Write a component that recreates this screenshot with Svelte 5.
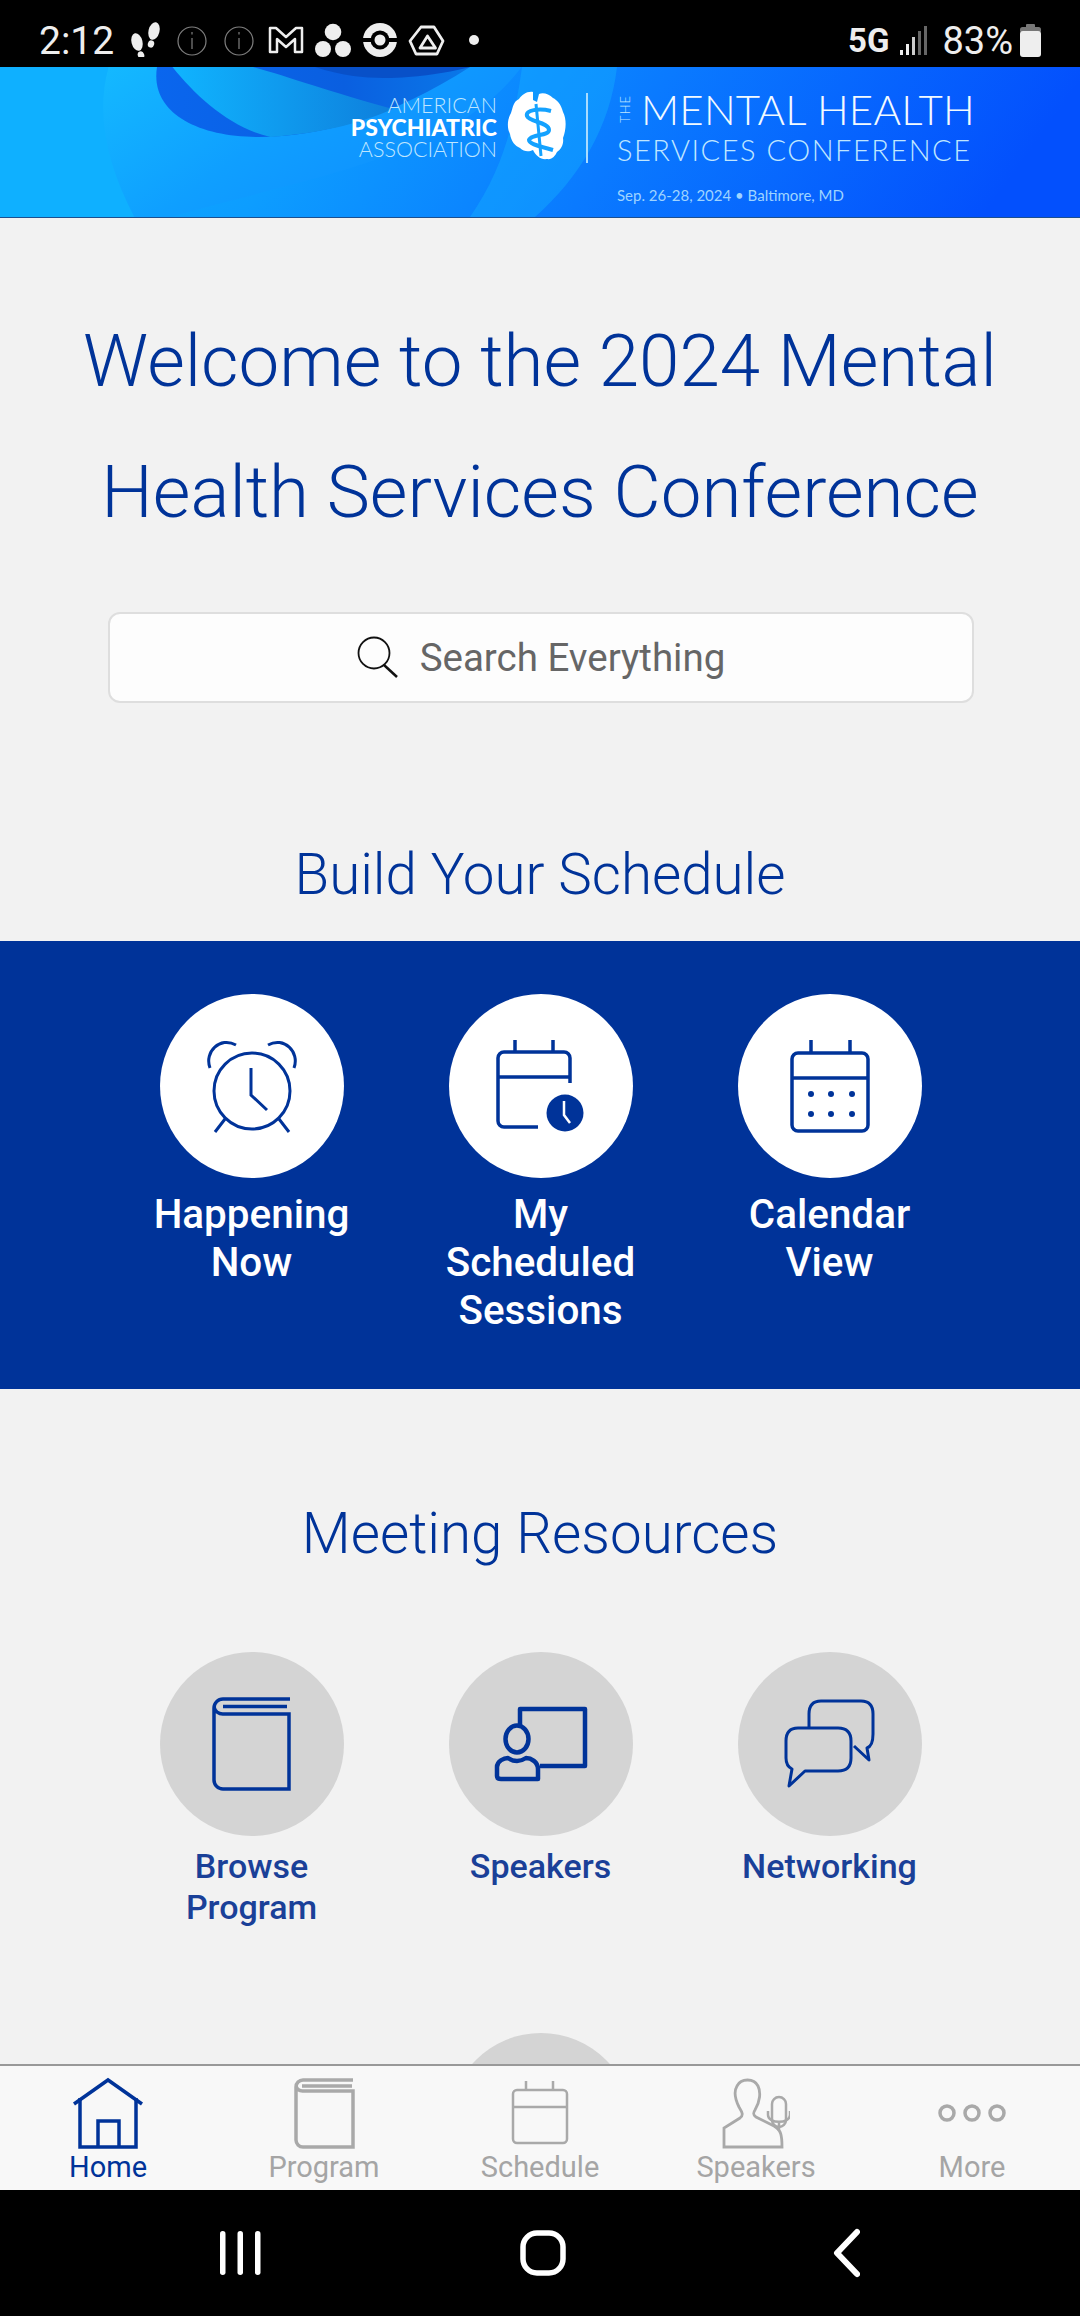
<script>
	const tabs = ['Home', 'Program', 'Schedule', 'Speakers', 'More']
</script>

<div class="phone">
	<header class="status">
		<span class="time">2:12</span>
		<svg class="notif" width="360" height="46" viewBox="0 0 360 46" aria-hidden="true">
			<!-- footsteps -->
			<g fill="#eee">
				<ellipse cx="10" cy="31" rx="5.500" ry="9" transform="rotate(-14 10 31)" />
				<ellipse cx="14" cy="44" rx="3.200" ry="3.800" transform="rotate(-20 14 44)" />
				<ellipse cx="27" cy="20" rx="5.500" ry="9" transform="rotate(14 27 20)" />
				<ellipse cx="24" cy="33" rx="3.200" ry="3.600" transform="rotate(15 24 33)" />
			</g>
			<g fill="none" stroke="#808080" stroke-width="1.200">
				<circle cx="65" cy="30" r="14" />
				<circle cx="112" cy="30" r="14" />
				<path d="M65 27v11M65 21v2.500M112 27v11M112 21v2.500" />
			</g>
			<path d="M143 17h6l10 9 10-9h6v24h-7V28l-9 8-9-8v13h-7Z" fill="none" stroke="#eee" stroke-width="2.500" stroke-linejoin="round" />
			<g fill="#eee">
				<circle cx="206" cy="21" r="8.300" />
				<circle cx="196" cy="38" r="8" />
				<circle cx="216" cy="38" r="8" />
			</g>
			<circle cx="253" cy="29" r="17" fill="#eee" />
			<rect x="235" y="27" width="36" height="4" fill="#000" />
			<circle cx="253" cy="29" r="9.500" fill="#000" />
			<circle cx="253" cy="29" r="5.500" fill="#eee" />
			<path d="M294 16h13l9 14-6 13h-21l-6-13Z" fill="none" stroke="#eee" stroke-width="2.800" stroke-linejoin="round" />
			<path d="M300.500 25l8 12h-15.500Z" fill="none" stroke="#eee" stroke-width="2.800" stroke-linejoin="round" />
			<circle cx="347" cy="29" r="5" fill="#eee" />
		</svg>
		<span class="spacer"></span>
		<span class="net">5G</span>
		<svg class="signal" width="27" height="29" viewBox="0 0 27 29" aria-hidden="true">
			<rect x="0" y="24" width="3" height="5" fill="#eee" />
			<rect x="6" y="18" width="3" height="11" fill="#eee" />
			<rect x="12" y="11" width="3" height="18" fill="#ccc" />
			<rect x="18" y="5" width="3" height="24" fill="#666" />
			<rect x="24" y="0" width="3" height="29" fill="#666" />
		</svg>
		<span class="pct">83%</span>
		<svg class="batt" width="21" height="33" viewBox="0 0 21 33" aria-hidden="true">
			<rect x="6" y="0" width="9" height="5" rx="1" fill="#777" />
			<rect x="0" y="3" width="21" height="6" rx="2.500" fill="#777" />
			<rect x="0" y="7" width="21" height="26" rx="3" fill="#eee" />
		</svg>
	</header>

	<div class="banner">
		<svg class="swoosh" viewBox="0 0 1080 150" preserveAspectRatio="none" aria-hidden="true">
			<defs>
				<linearGradient id="base" x1="0" x2="1" y1="0" y2="0.1">
					<stop offset="0" stop-color="#0fb3ff" />
					<stop offset="0.32" stop-color="#0d9dff" />
					<stop offset="0.62" stop-color="#0a7aff" />
					<stop offset="1" stop-color="#0350fd" />
				</linearGradient>
				<linearGradient id="band" x1="0" x2="1" y1="0" y2="0.5">
					<stop offset="0" stop-color="#14b9ff" />
					<stop offset="0.5" stop-color="#0f9fff" />
					<stop offset="1" stop-color="#0f8dff" />
				</linearGradient>
				<linearGradient id="deep" x1="0" x2="1" y1="0" y2="0">
					<stop offset="0" stop-color="#0a66ee" />
					<stop offset="0.6" stop-color="#0a5fe0" />
					<stop offset="1" stop-color="#0a78e8" />
				</linearGradient>
				<linearGradient id="arc" x1="0" x2="1" y1="0" y2="0">
					<stop offset="0" stop-color="#10b4ff" />
					<stop offset="1" stop-color="#0e7fdc" />
				</linearGradient>
			</defs>
			<rect width="1080" height="150" fill="url(#base)" />
			<g transform="scale(1.033 1)">
				<path d="M105 0C92 50 118 110 165 150L0 150V0Z" fill="#0fb0ff" />
				<path d="M105 0C92 50 105 100 130 150H165C300 110 440 90 505 0Z" fill="url(#band)" />
				<path d="M152 0C145 45 190 70 250 70C310 70 380 50 455 0Z" fill="url(#deep)" />
				<path d="M167 0C190 30 225 62 262 70C310 66 345 58 380 42C320 25 280 10 245 0Z" fill="url(#arc)" />
				<path d="M305 0C340 12 370 12 395 10C420 8 440 4 455 0Z" fill="#0850c8" />
			</g>
			<path d="M522 0H617C610 60 580 110 535 150H470C505 100 515 50 522 0Z" fill="#14acff" opacity="0.45" />
		</svg>
		<div class="brand">
			<div class="apa">
				<span>AMERICAN</span>
				<strong>PSYCHIATRIC</strong>
				<span>ASSOCIATION</span>
			</div>
			<svg class="emblem" width="60" height="72" viewBox="0 0 60 72" aria-hidden="true">
				<path d="M26 2C20 1 15 5 12 9C6 12 6 17 4 23C0 30 0 38 3 44C4 51 8 56 13 58C17 62 22 62 26 60C29 66 34 70 40 69C45 70 48 66 50 62C54 60 57 54 56 48C59 40 60 30 56 22C54 14 50 10 46 8C42 4 36 2 32 4L30 12L26 10Z" fill="#fff" />
				<path d="M44 21C32 18 18 20 20 26C22 32 42 32 42 40C42 46 24 44 22 50C22 54 32 56 46 60" fill="none" stroke="#14a2ff" stroke-width="4" />
				<path d="M29 14L34 66" fill="none" stroke="#14a2ff" stroke-width="3" />
			</svg>
			<span class="rule"></span>
			<div class="conf">
				<div class="conf-top"><span class="the">THE</span><span class="mental">MENTAL HEALTH</span></div>
				<div class="services">SERVICES CONFERENCE</div>
				<div class="date">Sep. 26-28, 2024 • Baltimore, MD</div>
			</div>
		</div>
	</div>

	<main class="content">
		<h1>Welcome to the 2024 Mental Health Services Conference</h1>

		<div class="search">
			<svg width="42" height="44" viewBox="0 0 42 44" fill="none" stroke="#111" aria-hidden="true">
				<circle cx="17" cy="17" r="15.500" stroke-width="1.800" />
				<path d="M27 29l13 12" stroke-width="2.500" />
			</svg>
			<span>Search Everything</span>
		</div>

		<h2>Build Your Schedule</h2>

		<section class="band">
			<div class="grid">
				<div class="item">
					<div class="circle white">
						<svg width="92" height="96" viewBox="0 0 92 96" fill="none" stroke="#003399" stroke-width="3" aria-hidden="true">
							<circle cx="46" cy="53" r="38" />
							<path d="M4 30C-2 14 14-2 30 7M88 30C94 14 78-2 62 7" />
							<path d="M19 81L9 94M73 81L83 94" />
							<path d="M45 30V57L61 72" />
						</svg>
					</div>
					<div class="label">Happening<br />Now</div>
				</div>
				<div class="item">
					<div class="circle white">
						<svg width="92" height="96" viewBox="0 0 92 96" fill="none" stroke="#003399" stroke-width="3.500" aria-hidden="true">
							<path d="M75 45V20a6 6 0 0 0-6-6H9a6 6 0 0 0-6 6v63a6 6 0 0 0 6 6H43" />
							<path d="M3 39H75M20 2V14M58 2V14" />
							<circle cx="70" cy="75" r="18.500" fill="#003399" stroke="none" />
							<path d="M69 63V77L75 85" stroke="#fff" stroke-width="2.500" />
						</svg>
					</div>
					<div class="label">My<br />Scheduled<br />Sessions</div>
				</div>
				<div class="item">
					<div class="circle white">
						<svg width="92" height="96" viewBox="0 0 92 96" fill="none" stroke="#003399" stroke-width="3.500" aria-hidden="true">
							<rect x="8" y="15" width="76" height="78" rx="6" />
							<path d="M8 40H84M27 2V15M66 2V15" />
							<g fill="#003399" stroke="none">
								<circle cx="27" cy="56" r="3" />
								<circle cx="47" cy="56" r="3" />
								<circle cx="68" cy="56" r="3" />
								<circle cx="27" cy="76" r="3" />
								<circle cx="47" cy="76" r="3" />
								<circle cx="68" cy="76" r="3" />
							</g>
						</svg>
					</div>
					<div class="label">Calendar<br />View</div>
				</div>
			</div>
		</section>

		<h2 class="second">Meeting Resources</h2>

		<section class="resources">
			<div class="item">
				<div class="circle">
					<svg width="82" height="96" viewBox="0 0 82 96" fill="none" stroke="#003399" stroke-width="3.500" aria-hidden="true">
						<path d="M79 3H12a9 9 0 0 0-9 9V84a9 9 0 0 0 9 9H78V18H12a9 9 0 0 1-9-7" />
						<path d="M12 10.500H76" stroke-width="3.500" />
					</svg>
				</div>
				<div class="label small">Browse<br />Program</div>
			</div>
			<div class="item">
				<div class="circle">
					<svg width="94" height="76" viewBox="0 0 94 76" fill="none" stroke="#003399" stroke-width="4.500" stroke-linejoin="round" aria-hidden="true">
						<path d="M26 22V3H91V60H46" />
						<ellipse cx="23" cy="33" rx="11.500" ry="13.500" />
						<path d="M3 70V61C3 55 10 52 14 52Q23 58 32 52C37 52 44 56 44 63V73H7Q3 73 3 70Z" />
					</svg>
				</div>
				<div class="label small">Speakers</div>
			</div>
			<div class="item">
				<div class="circle">
					<svg width="94" height="92" viewBox="0 0 94 92" fill="none" stroke="#003399" stroke-width="3" stroke-linejoin="round" aria-hidden="true">
						<path d="M26 30V16Q26 3 38 3H78Q90 3 90 16V36Q90 48 84 50L86 62L71 48" />
						<path d="M15 30H55Q68 30 68 43V60Q68 73 55 73H22L6 88L9 71Q3 68 3 60V43Q3 30 15 30Z" />
					</svg>
				</div>
				<div class="label small">Networking</div>
			</div>
			<div class="item next">
				<div class="circle"></div>
			</div>
		</section>
	</main>

	<nav class="tabs">
		{#each tabs as tab, i}
			<div class="tab" class:active={i === 0}>
				<div class="tab-icon">
					{#if i === 0}
						<svg width="72" height="72" viewBox="0 0 72 72" fill="none" stroke="#003399" stroke-width="3.500">
							<path d="M2 27L36 3L70 27" />
							<path d="M8 21V70H64V21M26 70V44H47V70" />
						</svg>
					{:else if i === 1}
						<svg width="62" height="72" viewBox="0 0 62 72" fill="none" stroke="#a9a9a9" stroke-width="3.500">
							<path d="M60 3H10a7 7 0 0 0-7 7V63a7 7 0 0 0 7 7H60V14H10a7 7 0 0 1-7-5" />
							<path d="M9 9H59" />
						</svg>
					{:else if i === 2}
						<svg width="60" height="66" viewBox="0 0 60 66" fill="none" stroke="#a9a9a9" stroke-width="2.500">
							<rect x="3" y="10" width="54" height="53" rx="4" />
							<path d="M3 27H57M16 1V10M43 1V10" />
						</svg>
					{:else if i === 3}
						<svg width="68" height="72" viewBox="0 0 68 72" fill="none" stroke="#a9a9a9" stroke-width="2.800">
							<path d="M2 70V51L18 41C22 38 20 35 17 30C13 22 12 14 15 9C19 1 32 1 36 9C39 15 38 25 33 33C31 36 31 38 34 40L52 49C59 53 60 58 60 70Z" />
							<rect x="50" y="20" width="14" height="30" rx="7" stroke-width="2.500" />
							<path d="M46 34V38C46 47 68 47 68 38V34M57 46V54" stroke-width="2.500" />
						</svg>
					{:else}
						<svg width="72" height="20" viewBox="0 0 72 20" fill="none" stroke="#a9a9a9" stroke-width="3.500">
							<circle cx="11" cy="10" r="7" />
							<circle cx="36" cy="10" r="7" />
							<circle cx="61" cy="10" r="7" />
						</svg>
					{/if}
				</div>
				<span>{tab}</span>
			</div>
		{/each}
	</nav>

	<footer class="nav">
		<svg width="41" height="46" viewBox="0 0 41 46" fill="#fff" aria-hidden="true">
			<rect x="0" y="1" width="5.500" height="44" rx="2.700" />
			<rect x="17.500" y="1" width="5.500" height="44" rx="2.700" />
			<rect x="35" y="1" width="5.500" height="44" rx="2.700" />
		</svg>
		<svg class="home" width="46" height="46" viewBox="0 0 46 46" fill="none" stroke="#fff" stroke-width="5.500" aria-hidden="true">
			<rect x="3" y="3" width="40" height="40" rx="14" />
		</svg>
		<svg class="back" width="27" height="50" viewBox="0 0 27 50" fill="none" stroke="#fff" stroke-width="6" stroke-linecap="round" stroke-linejoin="round" aria-hidden="true">
			<path d="M24 4L4 25L24 46" />
		</svg>
	</footer>
</div>

<style>
	:global(body) {
		margin: 0;
		background: #f2f2f2;
	}

	.phone {
		width: 1080px;
		height: 2316px;
		display: flex;
		flex-direction: column;
		overflow: hidden;
		font-family: Roboto, sans-serif;
	}

	.status {
		height: 67px;
		flex: none;
		background: #000;
		color: #eee;
		display: flex;
		align-items: center;
		padding: 14px 39px 0 39px;
		box-sizing: border-box;
	}

	.time {
		font-size: 39px;
		width: 88px;
	}

	.notif {
		flex: none;
		margin-top: -14px;
	}

	.spacer {
		flex: 1;
	}

	.net {
		font-size: 33px;
		font-weight: 700;
		margin-right: 11px;
	}

	.signal {
		flex: none;
	}

	.pct {
		font-size: 38px;
		margin: 0 7px 0 15px;
	}

	.batt {
		flex: none;
	}

	.banner {
		position: relative;
		height: 151px;
		flex: none;
		border-bottom: 1px solid #1d4f8f;
		box-sizing: border-box;
		overflow: hidden;
	}

	.swoosh {
		position: absolute;
		inset: 0;
		width: 100%;
		height: 100%;
	}

	.brand {
		position: relative;
		display: flex;
		align-items: flex-start;
		height: 100%;
		padding-left: 330px;
		box-sizing: border-box;
		font-family: Lato, sans-serif;
		color: #fff;
	}

	.apa {
		width: 167px;
		margin-top: 27px;
		display: flex;
		flex-direction: column;
		text-align: right;
		font-size: 21.500px;
		line-height: 22px;
		font-weight: 300;
		white-space: nowrap;
	}

	.apa span {
		color: #bfe6ff;
	}

	.apa strong {
		font-weight: 900;
		font-size: 23px;
	}

	.emblem {
		flex: none;
		margin: 23px 0 0 10px;
	}

	.rule {
		width: 2px;
		height: 70px;
		margin: 26px 0 0 19px;
		background: #a9dcff;
	}

	.conf {
		margin: 20px 0 0 29px;
		width: 345px;
	}

	.conf-top {
		display: flex;
		align-items: center;
		height: 44px;
	}

	.the {
		writing-mode: vertical-rl;
		transform: rotate(180deg);
		font-size: 13px;
		font-weight: 300;
		letter-spacing: 1px;
		color: #bfe6ff;
		margin-right: 8px;
	}

	.mental {
		font-size: 42px;
		font-weight: 300;
		letter-spacing: 0.200px;
		color: #f2faff;
		white-space: nowrap;
	}

	.services {
		margin-top: 1px;
		font-size: 29px;
		line-height: 36px;
		font-weight: 300;
		letter-spacing: 1.500px;
		color: #bfe6ff;
		white-space: nowrap;
	}

	.date {
		margin-top: 18px;
		font-size: 15px;
		color: #9fd4ff;
		white-space: nowrap;
	}

	.content {
		flex: 1;
		min-height: 0;
		overflow: hidden;
		background: #f2f2f2;
		text-align: center;
	}

	h1 {
		margin: 78px 50px 0;
		font-size: 72.700px;
		line-height: 131px;
		font-weight: 300;
		color: #003399;
	}

	.search {
		margin: 54px 106px 0 108px;
		height: 91px;
		box-sizing: border-box;
		border: 2px solid #dedede;
		border-radius: 12px;
		background: #fdfdfd;
		display: flex;
		align-items: center;
		justify-content: center;
		gap: 21px;
		font-size: 38.500px;
		color: #666;
	}

	h2 {
		margin: 142px 0 0;
		font-size: 56.500px;
		line-height: 60px;
		font-weight: 300;
		color: #003399;
	}

	.band {
		margin-top: 36px;
		height: 448px;
		box-sizing: border-box;
		padding-top: 53px;
		background: #003399;
	}

	.grid,
	.resources {
		display: grid;
		grid-template-columns: repeat(3, 289px);
		justify-content: center;
		padding-left: 1px;
	}

	.item {
		display: flex;
		flex-direction: column;
		align-items: center;
	}

	.circle {
		width: 184px;
		height: 184px;
		border-radius: 50%;
		background: #d4d4d4;
		display: flex;
		align-items: center;
		justify-content: center;
	}

	.white {
		background: #fff;
	}

	.label {
		margin-top: 13px;
		font-size: 40.400px;
		line-height: 48px;
		font-weight: 500;
		color: #fff;
	}

	.second {
		margin-top: 115px;
	}

	.resources {
		margin-top: 88px;
		row-gap: 105px;
	}

	.label.small {
		margin-top: 10px;
		font-size: 34px;
		line-height: 41px;
		color: #1a4098;
	}

	.next {
		grid-column: 2;
	}

	.tabs {
		height: 126px;
		flex: none;
		box-sizing: border-box;
		border-top: 2px solid #999;
		background: #f8f8f8;
		display: grid;
		grid-template-columns: repeat(5, 1fr);
	}

	.tab {
		display: flex;
		flex-direction: column;
		align-items: center;
		font-size: 29px;
		color: #a5a5a5;
	}

	.tab-icon {
		height: 72px;
		margin-top: 11px;
		display: flex;
		align-items: center;
		justify-content: center;
	}

	.tab span {
		margin-top: 1px;
		line-height: 34px;
	}

	.active {
		color: #003399;
	}

	.nav {
		height: 126px;
		flex: none;
		background: #000;
		display: flex;
		align-items: center;
		padding-left: 220px;
		box-sizing: border-box;
	}

	.home {
		margin-left: 259px;
	}

	.back {
		margin-left: 267px;
	}
</style>
